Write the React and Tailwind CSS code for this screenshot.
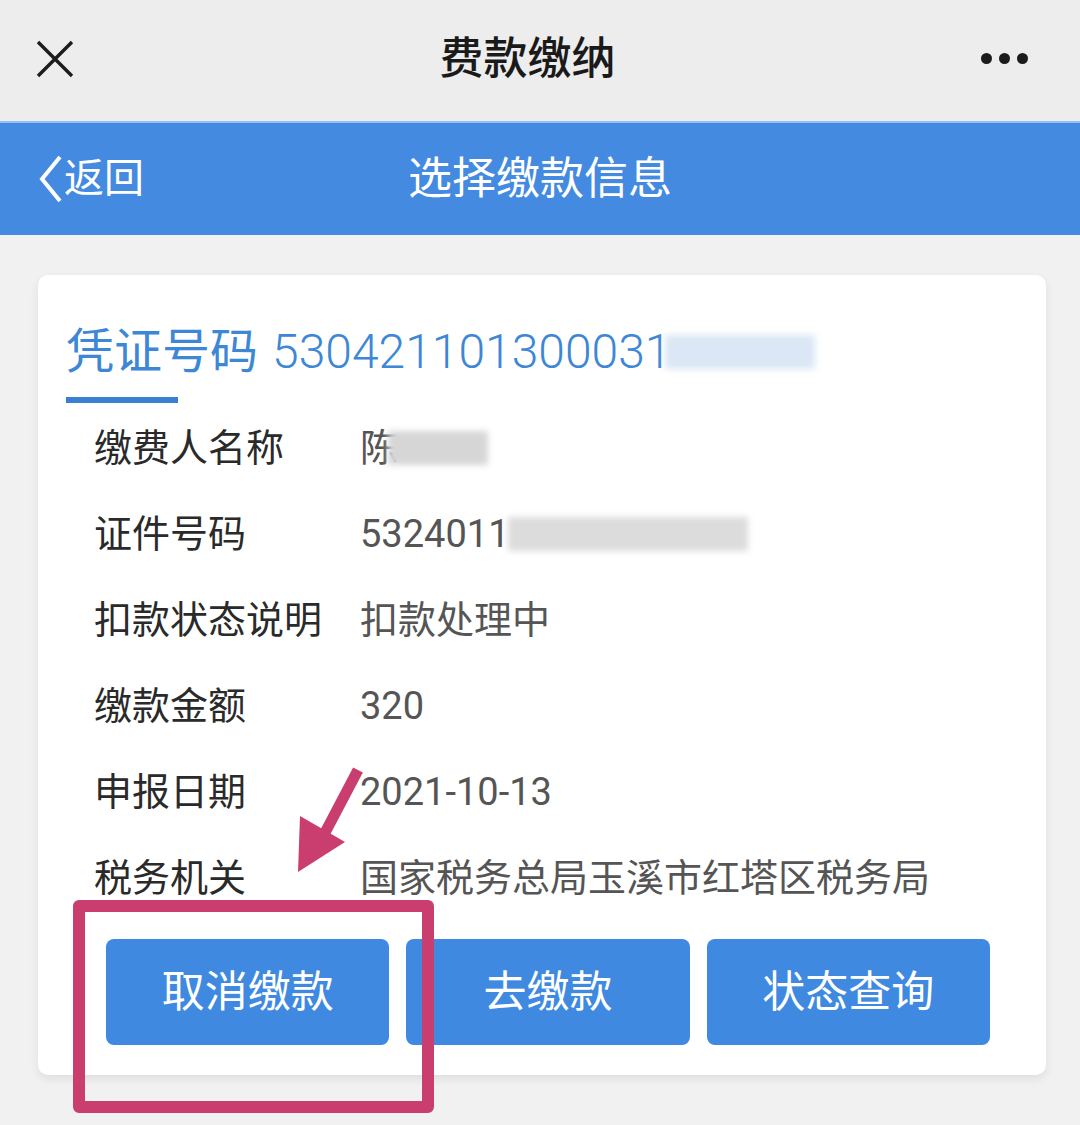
const rows = [
  ['缴费人名称', 'name'],
  ['证件号码', 'id'],
  ['扣款状态说明', '扣款处理中'],
  ['缴款金额', '320'],
  ['申报日期', '2021-10-13'],
  ['税务机关', '国家税务总局玉溪市红塔区税务局'],
]

const font = { fontFamily: 'Roboto, "Noto Sans CJK SC", sans-serif' }

function Blur({ w, tone }) {
  return (
    <span
      className={`inline-block h-[34px] align-middle blur-[3px] ${tone}`}
      style={{ width: w }}
    />
  )
}

function Value({ v }) {
  if (v === 'name')
    return (
      <span className="flex items-center">
        陈<Blur w={100} tone="bg-[#d6d6d6] -ml-[10px]" />
      </span>
    )
  if (v === 'id')
    return (
      <span className="flex items-center">
        5324011<Blur w={240} tone="bg-[#dcdcdc] -ml-[2px]" />
      </span>
    )
  return <span>{v}</span>
}

export default function App() {
  return (
    <div className="w-[1080px] h-[1125px] bg-[#f1f1f1] relative overflow-hidden" style={font}>
      <div className="h-[121px] bg-[#ededed] flex items-center justify-between pl-[36px] pr-[34px]">
        <svg width="38" height="38" viewBox="0 0 38 38" stroke="#1c1c1c" strokeWidth="3.4" className="-mt-[4px]">
          <path d="M2 2 L36 36 M36 2 L2 36" />
        </svg>
        <div className="text-[44px] font-medium text-[#1a1a1a] -mt-[4px]">费款缴纳</div>
        <div className="flex gap-[7px] pr-[18px] -mt-[4px]">
          <span className="w-[11px] h-[11px] rounded-full bg-[#1c1c1c]" />
          <span className="w-[11px] h-[11px] rounded-full bg-[#1c1c1c]" />
          <span className="w-[11px] h-[11px] rounded-full bg-[#1c1c1c]" />
        </div>
      </div>
      <div className="h-[114px] bg-[#448ae0] border-t-2 border-[#8ec2f2] flex items-center relative">
        <div className="flex items-center pl-[36px] text-white text-[40px]">
          <svg width="28" height="52" viewBox="0 0 28 52" fill="none" stroke="white" strokeWidth="4">
            <path d="M24 4 L6 26 L24 48" />
          </svg>
          <span>返回</span>
        </div>
        <div className="absolute left-0 right-0 text-center text-white text-[44px] pointer-events-none">选择缴款信息</div>
      </div>

      <div className="ml-[38px] mr-[34px] mt-[40px] bg-white rounded-[10px] shadow-[0_4px_10px_rgba(0,0,0,0.08)] pt-[46px] pb-[30px]">
        <div className="pl-[28px] flex items-center text-[#3c87d6] h-[62px]">
          <span className="text-[48px]">凭证号码</span>
          <span className="text-[48px] font-light ml-[14px]">530421101300031</span>
          <Blur w={150} tone="bg-[#dbe7f5] -ml-[6px]" />
        </div>
        <div className="ml-[28px] mt-[14px] w-[112px] h-[6px] bg-[#3a7fd0]" />
        <div className="pl-[56px] pt-[2px]">
          {rows.map(([k, v]) => (
            <div key={k} className="h-[86px] flex items-center text-[38px]">
              <span className="w-[266px] text-[#2a2a2a]">{k}</span>
              <span className="text-[#555]"><Value v={v} /></span>
            </div>
          ))}
        </div>
        <div className="mt-[18px] ml-[68px] mr-[56px] flex gap-[17px]">
          {['取消缴款', '去缴款', '状态查询'].map((t) => (
            <button
              key={t}
              className="flex-1 h-[106px] rounded-[8px] bg-[#3f8ae0] text-white text-[43px] flex items-center justify-center"
            >
              {t}
            </button>
          ))}
        </div>
      </div>

      <div className="absolute left-[73px] top-[900px] w-[361px] h-[213px] border-[12px] border-[#c93e6f] rounded-[6px]" />
      <svg className="absolute left-0 top-0" width="1080" height="1125" style={{ pointerEvents: 'none' }}>
        <line x1="358" y1="770" x2="318" y2="846" stroke="#c93e6f" strokeWidth="11" />
        <polygon points="298,872 300,816 345,842" fill="#c93e6f" />
      </svg>
    </div>
  )
}
